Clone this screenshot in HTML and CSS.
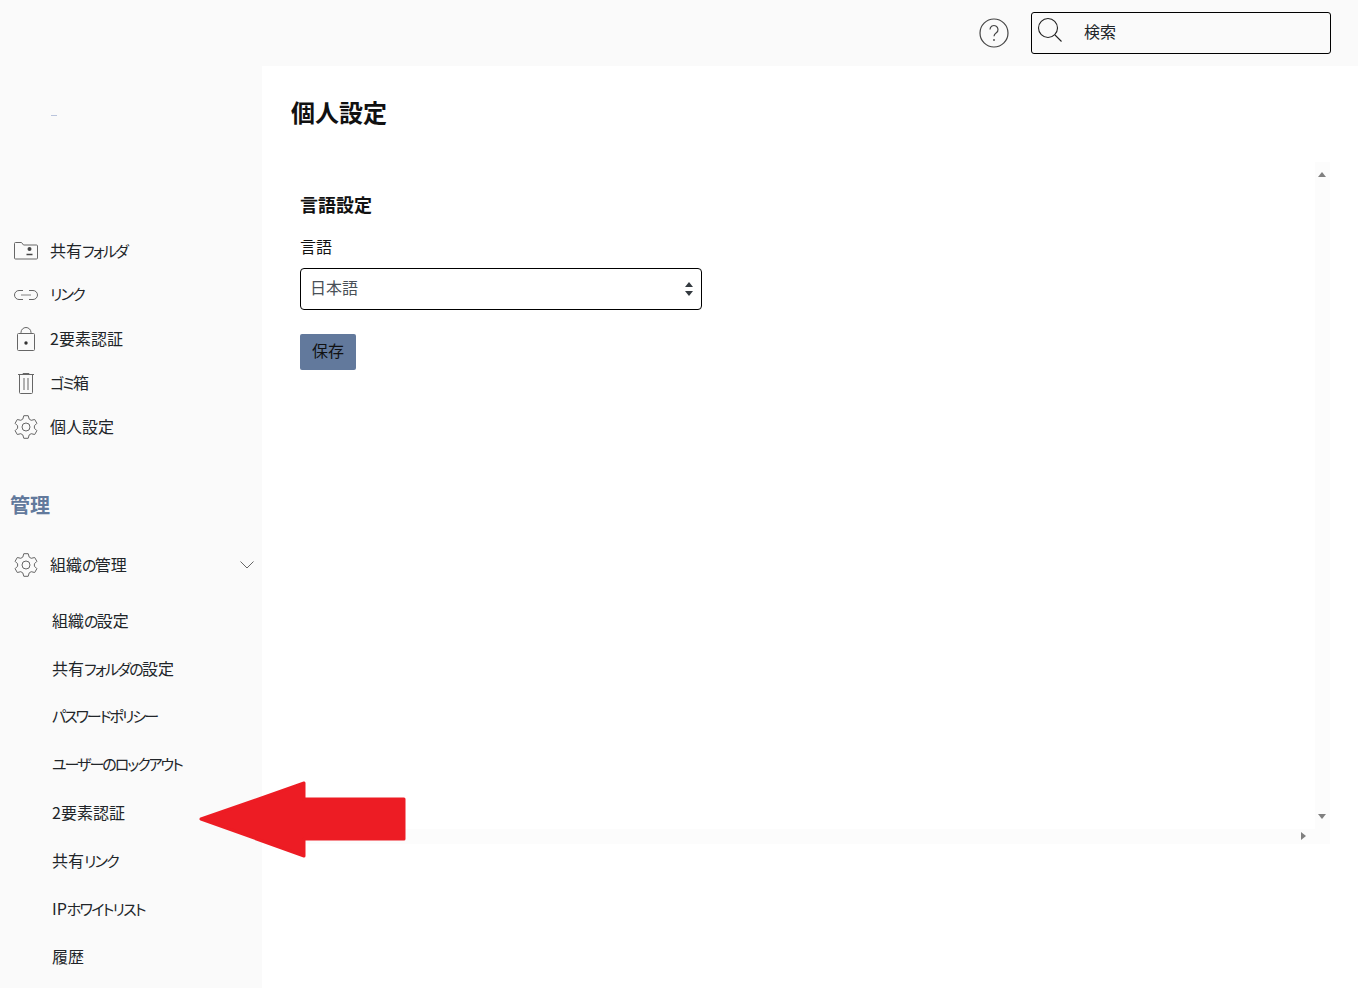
FILE: index.html
```html
<!DOCTYPE html>
<html lang="ja">
<head>
<meta charset="utf-8">
<title>個人設定</title>
<link rel="stylesheet" href="styles.css">
</head>
<body>
<div class="app">
  <header class="topbar">
    <svg class="help" width="30" height="30" viewBox="0 0 30 30"><circle cx="15" cy="15" r="14" fill="none" stroke="#444" stroke-width="1.2"/><path d="M11 11.5a4 4 0 1 1 6.3 3.3c-1.4 1-2.3 1.8-2.3 3.5" fill="none" stroke="#444" stroke-width="1.2"/><circle cx="15" cy="22" r=".9" fill="#444"/></svg>
    <div class="search">
      <svg class="search-icon" width="26" height="26" viewBox="0 0 26 26"><circle cx="11" cy="11" r="9.5" fill="none" stroke="#222" stroke-width="1.1"/><path d="M18 18l6.5 6.5" stroke="#222" stroke-width="1.1"/></svg>
      <span class="search-text">検索</span>
    </div>
  </header>
  <aside class="sidebar">
    <div class="brand"><span class="brand-mark"></span></div>
    <nav class="nav-main">
      <a class="item"><span class="ic"><svg width="24" height="18" viewBox="0 0 24 18"><path d="M.5 1.5a1 1 0 0 1 1-1h6l2 2.500h13a1 1 0 0 1 1 1v12a1 1 0 0 1-1 1h-21a1 1 0 0 1-1-1z" fill="none" stroke="#666"/><circle cx="15.500" cy="7" r="2" fill="#444"/><path d="M12.500 12.500h6" stroke="#444" stroke-width="1.500"/></svg></span><span>共有<span class="k">フォルダ</span></span></a>
      <a class="item"><span class="ic"><svg width="24" height="10" viewBox="0 0 24 10"><path d="M9 .5H5a4.500 4.500 0 0 0 0 9h4M15 .5h4a4.500 4.500 0 0 1 0 9h-4" fill="none" stroke="#666"/><path d="M7 5h10" stroke="#aaa" stroke-width="1.500"/></svg></span><span class="k">リンク</span></a>
      <a class="item"><span class="ic"><svg width="18" height="24" viewBox="0 0 18 24"><rect x=".5" y="6.500" width="17" height="17" rx="1" fill="none" stroke="#666"/><path d="M4 6.500V5.500a5 5 0 0 1 10 0v1" fill="none" stroke="#666"/><circle cx="9" cy="16" r="1.700" fill="#333"/></svg></span>2要素認証</a>
      <a class="item"><span class="ic"><svg width="16" height="21" viewBox="0 0 16 21"><path d="M0 1.500h16M5 1.500V.5h6v1M1.500 1.500v18a1 1 0 0 0 1 1h11a1 1 0 0 0 1-1v-18M6 5v12M10 5v12" fill="none" stroke="#666"/></svg></span><span><span class="k">ゴミ</span>箱</span></a>
      <a class="item"><span class="ic"><svg width="24" height="24" viewBox="0 0 24 24"><path class="gear" d="M8.800 4.100L9.800.7H14.200L15.200 4.100L17.200 5.300L20.700 4.500L22.900 8.300L20.400 10.800V13.200L22.900 15.700L20.700 19.500L17.200 18.700L15.200 19.900L14.200 23.300H9.800L8.800 19.900L6.800 18.700L3.300 19.500L1.100 15.700L3.600 13.200V10.800L1.100 8.300L3.300 4.500L6.800 5.300Z"/><circle class="gear" cx="12" cy="12" r="4"/></svg></span>個人設定</a>
    </nav>
    <h2 class="admin">管理</h2>
    <a class="item group"><span class="ic"><svg width="24" height="24" viewBox="0 0 24 24"><path class="gear" d="M8.800 4.100L9.800.7H14.200L15.200 4.100L17.200 5.300L20.700 4.500L22.900 8.300L20.400 10.800V13.200L22.900 15.700L20.700 19.500L17.200 18.700L15.200 19.900L14.200 23.300H9.800L8.800 19.900L6.800 18.700L3.300 19.500L1.100 15.700L3.600 13.200V10.800L1.100 8.300L3.300 4.500L6.800 5.300Z"/><circle class="gear" cx="12" cy="12" r="4"/></svg></span><span>組織<span class="k">の</span>管理</span><svg class="chev" width="14" height="8" viewBox="0 0 14 8"><path d="M.5.500L7 7l6.500-6.500" fill="none" stroke="#666"/></svg></a>
    <nav class="nav-sub">
      <a class="sub">組織<span class="k">の</span>設定</a>
      <a class="sub">共有<span class="k">フォルダの</span>設定</a>
      <a class="sub k long">パスワードポリシー</a>
      <a class="sub k long">ユーザーのロックアウト</a>
      <a class="sub">2要素認証</a>
      <a class="sub">共有<span class="k">リンク</span></a>
      <a class="sub">IP<span class="k">ホワイトリスト</span></a>
      <a class="sub">履歴</a>
    </nav>
  </aside>
  <main class="main">
    <h1 class="title">個人設定</h1>
    <div class="scroller">
      <section class="pane">
        <h3 class="section">言語設定</h3>
        <label class="label">言語</label>
        <div class="select"><span>日本語</span><svg width="8" height="14" viewBox="0 0 8 14"><path d="M4 0l4 5H0zM4 14l4-5H0z" fill="#343a40"/></svg></div>
        <button class="save">保存</button>
      </section>
      <div class="vbar"><i class="tri up"></i><i class="tri down"></i></div>
      <div class="hbar"><i class="tri right"></i></div>
      <div class="corner"></div>
    </div>
  </main>
</div>
<svg class="arrow" width="209" height="79" viewBox="0 0 209 79"><path d="M3 38L106 2V18H206V58H106V75Z" fill="#ed1c24" stroke="#ed1c24" stroke-width="3" stroke-linejoin="round"/></svg>
</body>
</html>
```
FILE: styles.css
```css
* { box-sizing: border-box; }
html, body { margin: 0; height: 100%; overflow: hidden; }
body {
  font-family: "Noto Sans CJK JP", "Noto Sans", sans-serif;
  font-size: 16px;
  color: #212529;
  background: #fff;
  font-feature-settings: "palt";
  position: relative;
}
.k { font-size: 15px; letter-spacing: -1.7px; }
.long { letter-spacing: -2px; }
.app {
  display: grid;
  grid-template-columns: 262px 1fr;
  grid-template-rows: 66px 1fr;
  height: 988px;
}
.topbar {
  grid-column: 1 / 3;
  background: #fafafa;
  display: flex;
  align-items: center;
  justify-content: flex-end;
  gap: 22px;
  padding-right: 27px;
}
.search {
  width: 300px;
  height: 42px;
  border: 1px solid #000;
  border-radius: 3px;
  display: flex;
  align-items: center;
  padding-left: 5px;
}
.search-icon { margin-top: -7px; }
.search-text { margin-left: 21px; font-size: 16px; margin-top: -4px; line-height: 24px; }
.sidebar { background: #fafafa; display: flex; flex-direction: column; }
.brand { height: 163px; padding: 49px 0 0 51px; }
.brand-mark { display: block; width: 6px; height: 1px; background: #b9c4dc; }
.nav-main { display: flex; flex-direction: column; }
.item {
  height: 44px;
  display: flex;
  align-items: center;
  line-height: 1;
  position: relative;
  padding-bottom: 3px;
}
.ic { width: 51px; margin-right: -1px; display: flex; justify-content: center; flex: none; margin-bottom: -3px; }
.gear { fill: none; stroke: #666; stroke-width: 1; stroke-linejoin: round; }
.admin {
  margin: 36px 0 0 10px;
  height: 40px;
  font-size: 20px;
  line-height: 40px;
  font-weight: 700;
  color: #62799c;
}
.group { margin-top: 18px; }
.chev { position: absolute; left: 240px; top: 18px; }
.nav-sub { display: flex; flex-direction: column; margin-top: 9px; }
.sub { height: 48px; line-height: 48px; padding-left: 52px; white-space: nowrap; }
.main { padding: 0 28px 0 29px; min-width: 0; }
.title { margin: 28px 0 0; font-size: 24px; line-height: 36px; font-weight: 700; color: #111; height: 68px; }
.scroller {
  display: grid;
  grid-template-columns: 1fr 15px;
  grid-template-rows: 667px 15px;
}
.pane { padding: 28px 0 0 9px; }
.section { margin: 0; font-size: 18px; line-height: 28px; font-weight: 700; color: #111; }
.label { display: block; margin: 16px 0 0; line-height: 24px; color: #111; }
.select {
  width: 402px;
  height: 42px;
  margin-top: 10px;
  border: 1px solid #000;
  border-radius: 4px;
  display: flex;
  align-items: center;
  justify-content: space-between;
  padding: 0 8px 0 9px;
  color: #495057;
  background: #fff;
}
.select span { margin-top: -4px; }
.save {
  display: block;
  width: 56px;
  height: 36px;
  margin-top: 24px;
  border: 0;
  border-radius: 2px;
  background: #62799c;
  color: #111;
  font: inherit;
  font-feature-settings: inherit;
  padding: 0 0 4px;
}
.vbar, .hbar, .corner { background: #fcfcfc; position: relative; }
.tri { position: absolute; width: 0; height: 0; border-style: solid; border-color: transparent; }
.up { left: 3px; top: 10px; border-width: 0 4.5px 5px; border-bottom-color: #808080; }
.down { left: 3px; bottom: 10px; border-width: 5px 4.5px 0; border-top-color: #808080; }
.right { right: 9px; top: 3px; border-width: 4.5px 0 4.5px 5px; border-left-color: #808080; }
.arrow { position: absolute; left: 198px; top: 781px; }
```
